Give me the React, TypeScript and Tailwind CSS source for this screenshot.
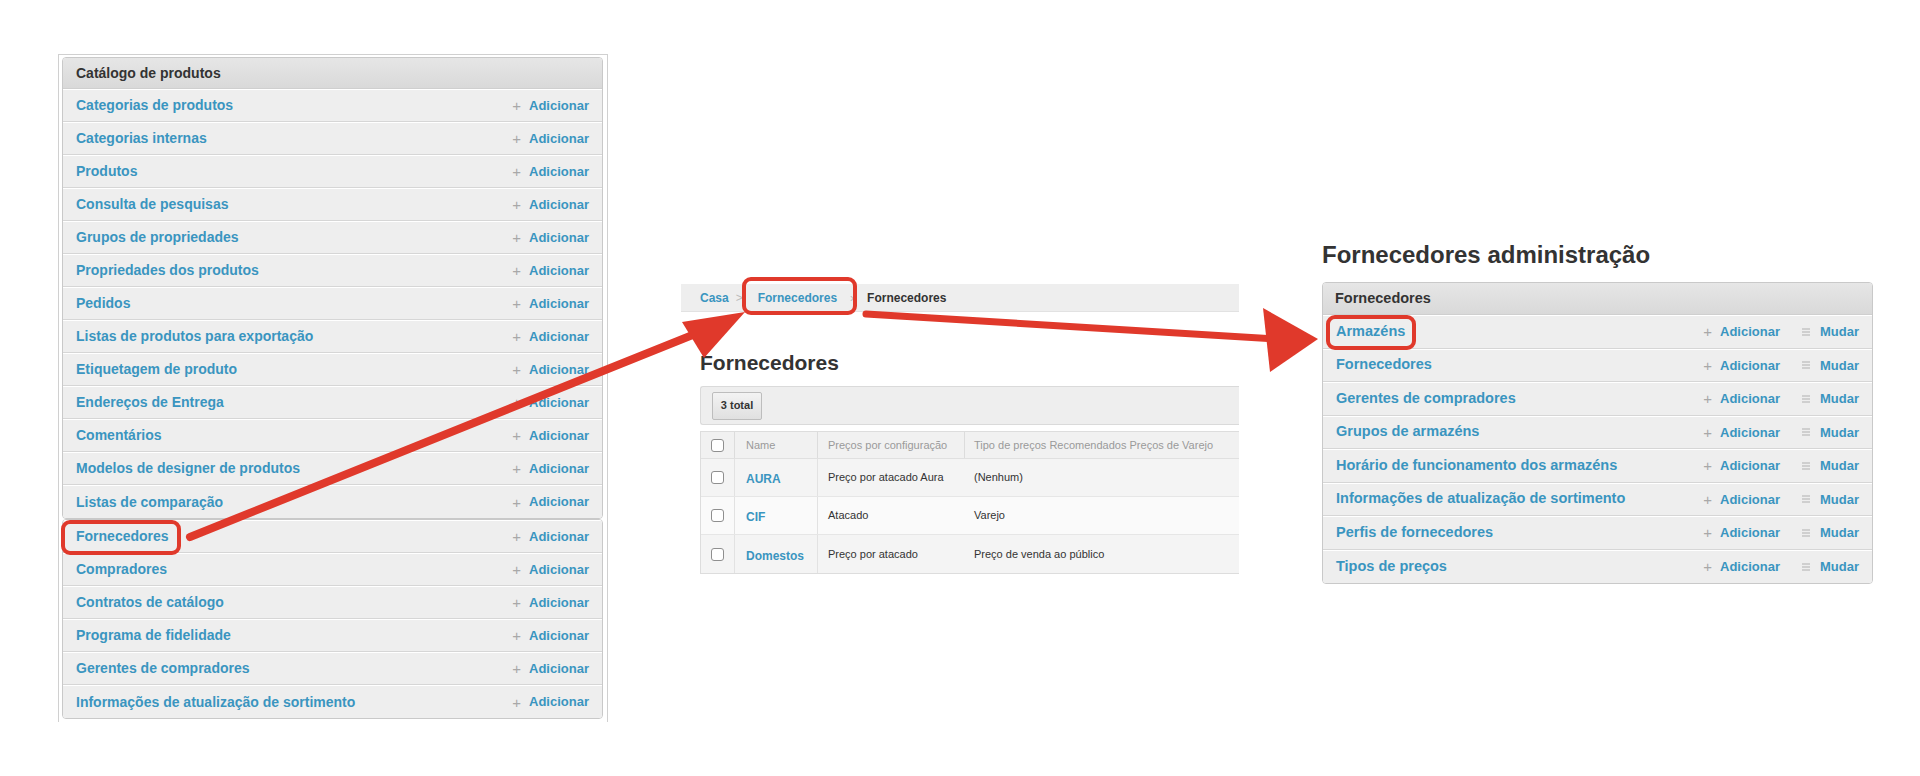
import { ReactNode } from "react";

const catalogo = [
  "Categorias de produtos",
  "Categorias internas",
  "Produtos",
  "Consulta de pesquisas",
  "Grupos de propriedades",
  "Propriedades dos produtos",
  "Pedidos",
  "Listas de produtos para exportação",
  "Etiquetagem de produto",
  "Endereços de Entrega",
  "Comentários",
  "Modelos de designer de produtos",
  "Listas de comparação",
];

const outros = [
  "Fornecedores",
  "Compradores",
  "Contratos de catálogo",
  "Programa de fidelidade",
  "Gerentes de compradores",
  "Informações de atualização de sortimento",
];

const fornecedoresAdmin = [
  "Armazéns",
  "Fornecedores",
  "Gerentes de compradores",
  "Grupos de armazéns",
  "Horário de funcionamento dos armazéns",
  "Informações de atualização de sortimento",
  "Perfis de fornecedores",
  "Tipos de preços",
];

const fornecedores = [
  { name: "AURA", config: "Preço por atacado Aura", tipo: "(Nenhum)", bg: "bg-[#f4f4f4]" },
  { name: "CIF", config: "Atacado", tipo: "Varejo", bg: "bg-[#fafafa]" },
  { name: "Domestos", config: "Preço por atacado", tipo: "Preço de venda ao público", bg: "bg-[#f4f4f4]" },
];

function Plus() {
  return <span className="text-[#a8a8a8] font-normal text-[15px] leading-none mr-[8px]">+</span>;
}

function Lines() {
  return (
    <svg width="10" height="10" viewBox="0 0 10 10" className="mr-[9px]">
      <path d="M1 2h8M1 5h8M1 8h8" stroke="#b0b0b0" strokeWidth="1" />
    </svg>
  );
}

function Row({ label, mudar, h }: { label: string; mudar?: boolean; h: string }) {
  return (
    <div
      className={`flex items-center justify-between ${h} px-[13px] bg-[#eeeeee] border-t border-t-white border-b border-b-[#d6d6d6] last:border-b-0`}
    >
      <span className="text-[#3a95c0] font-bold">{label}</span>
      <div className="flex items-center text-[13px] font-bold text-[#3a95c0]">
        <Plus />
        <span>Adicionar</span>
        {mudar && (
          <span className="flex items-center ml-[21px]">
            <Lines />
            Mudar
          </span>
        )}
      </div>
    </div>
  );
}

function Box({ children, className }: { children: ReactNode; className?: string }) {
  return (
    <div className={`border border-[#c9c9c9] rounded-[4px] overflow-hidden ${className ?? ""}`}>
      {children}
    </div>
  );
}

function Check() {
  return <span className="block w-[13px] h-[13px] border border-[#8f8f8f] rounded-[3px] bg-white" />;
}

export default function App() {
  return (
    <div className="relative w-[1920px] h-[776px] bg-white font-['Liberation_Sans',Arial,sans-serif] overflow-hidden">
      <div className="flex items-start">
        {/* catálogo */}
        <div className="ml-[58px] mt-[54px] w-[550px] border-l border-t border-r border-[#d0d0d0] pl-[3px] pr-[4px] pt-[2px] pb-[3px] text-[14px]">
          <Box>
            <div className="flex items-center h-[31px] bg-gradient-to-b from-[#e6e6e6] to-[#d9d9d9] text-[#333] font-bold px-[13px] border-b border-[#cfcfcf]">
              Catálogo de produtos
            </div>
            {catalogo.map((c) => (
              <Row key={c} label={c} h="h-[33px]" />
            ))}
          </Box>
          <Box>
            {outros.map((c) => (
              <Row key={c} label={c} h="h-[33px]" />
            ))}
          </Box>
        </div>

        {/* lista de fornecedores */}
        <div className="ml-[73px] mt-[284px] w-[558px] overflow-hidden">
          <div className="flex items-center h-[28px] bg-[#eeeeee] border-b border-[#e2e2e2] pl-[19px] text-[12px] font-bold">
            <span className="text-[#3a95c0]">Casa</span>
            <span className="text-[#bbb] font-normal mx-[7px]">&gt;</span>
            <span className="text-[#3a95c0] ml-[8px]">Fornecedores</span>
            <span className="text-[#bbb] font-normal mx-[13px]">›</span>
            <span className="text-[#333]">Fornecedores</span>
          </div>
          <div className="pl-[19px]">
            <h1 className="mt-[38px] text-[21px] leading-[26px] font-bold text-[#333]">Fornecedores</h1>
            <div className="mt-[10px] h-[39px] flex items-center bg-[#eeeeee] border border-r-0 border-[#dadada] rounded-l-[3px] pl-[11px]">
              <div className="h-[28px] w-[50px] flex items-center justify-center text-[11px] font-bold text-[#333] border border-[#bdbdbd] rounded-[2px] bg-gradient-to-b from-[#f3f3f3] to-[#e0e0e0]">
                3 total
              </div>
            </div>
            <div className="mt-[6px] w-[560px] border border-r-0 border-[#dddddd] text-[11px] text-[#333]">
              <div className="flex h-[27px] bg-[#f1f1f1] text-[#9a9a9a] border-b border-[#e0e0e0]">
                <div className="w-[34px] flex items-center justify-center border-r border-[#dcdcdc]"><Check /></div>
                <div className="w-[83px] flex items-center pl-[11px] border-r border-[#dcdcdc]">Name</div>
                <div className="w-[147px] flex items-center pl-[10px] border-r border-[#dcdcdc]">Preços por configuração</div>
                <div className="flex-1 flex items-center pl-[9px] whitespace-nowrap">Tipo de preços Recomendados Preços de Varejo</div>
              </div>
              {fornecedores.map((f) => (
                <div key={f.name} className={`flex h-[38px] ${f.bg} border-b border-[#e6e6e6] last:border-b-0`}>
                  <div className="w-[34px] flex items-center justify-center border-r border-[#e2e2e2]"><Check /></div>
                  <div className="w-[83px] flex items-center pl-[11px] pt-[3px] border-r border-[#e2e2e2] text-[#3a95c0] font-bold text-[12px]">
                    {f.name}
                  </div>
                  <div className="w-[147px] flex items-center pl-[10px]">{f.config}</div>
                  <div className="flex-1 flex items-center pl-[9px]">{f.tipo}</div>
                </div>
              ))}
            </div>
          </div>
        </div>

        {/* administração */}
        <div className="ml-[83px] mt-[240px] w-[551px]">
          <h1 className="text-[24px] leading-[30px] font-bold text-[#333]">Fornecedores administração</h1>
          <Box className="mt-[12px] text-[14.5px]">
            <div className="flex items-center h-[32px] bg-gradient-to-b from-[#e6e6e6] to-[#d9d9d9] text-[#333] font-bold px-[12px] border-b border-[#cfcfcf]">
              Fornecedores
            </div>
            {fornecedoresAdmin.map((c) => (
              <Row key={c} label={c} mudar h="h-[33.5px]" />
            ))}
          </Box>
        </div>
      </div>

      {/* anotações */}
      <svg className="absolute inset-0 pointer-events-none" width="1920" height="776" viewBox="0 0 1920 776">
        <g fill="none" stroke="#e0392b" strokeWidth="4">
          <rect x="63" y="522" width="116" height="31" rx="7" />
          <rect x="744" y="279" width="111" height="34" rx="7" />
          <rect x="1328" y="317" width="86" height="31" rx="7" />
        </g>
        <line x1="190" y1="537" x2="700" y2="332" stroke="#e0392b" strokeWidth="8" strokeLinecap="round" />
        <polygon points="745,312 682,322 704,358" fill="#e0392b" />
        <line x1="866" y1="314" x2="1275" y2="339" stroke="#e0392b" strokeWidth="7" strokeLinecap="round" />
        <polygon points="1263,308 1318,339 1270,372" fill="#e0392b" />
      </svg>
    </div>
  );
}
